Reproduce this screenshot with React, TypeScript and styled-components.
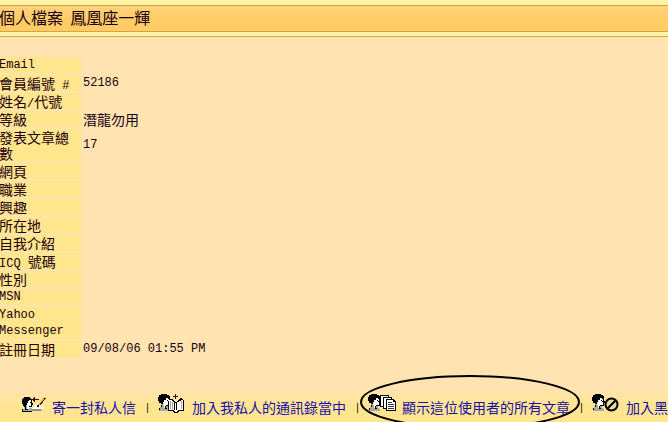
import React from "react";
import styled, { createGlobalStyle } from "styled-components";

const GlobalStyle = createGlobalStyle`
  html, body {
    margin: 0;
    overflow: hidden;
    background: #ffe3b0;
  }
  body {
    font-family: "Noto Sans CJK TC", sans-serif;
    font-size: 14px;
    line-height: 16px;
    color: #1a0010;
  }
`;

const Page = styled.main`
  position: relative;
  overflow: hidden;
`;

const Banner = styled.header`
  padding: 5px 0 4px;
  background: #fff3a6;
  border-bottom: 1px solid #dba850;
`;

const Title = styled.h1`
  margin: 0;
  padding: 0 0 3px;
  text-indent: -1px;
  font-size: 16px;
  font-weight: 400;
  line-height: 22px;
  background: linear-gradient(#ffd27a, #ffcb64 60%, #ffcc66);
  border: solid #d9a044;
  border-width: 1px 0;
`;

const Details = styled.table`
  margin: 18px 0 0 -3px;
  border-spacing: 2px;
  border-collapse: separate;
`;

const Label = styled.th`
  width: 82px;
  height: 16px;
  padding: 0;
  box-sizing: border-box;
  font-weight: 400;
  text-align: left;
  background: #ffe58c;
`;

const Value = styled.td`
  padding: 0;
  white-space: nowrap;
`;

const Mono = styled.span`
  font-family: "Liberation Mono", monospace;
  font-size: 12px;
  line-height: 0;
`;

const MonoBlock = styled(Mono)`
  display: block;
  line-height: 16px;
`;

const Actions = styled.nav`
  display: flex;
  align-items: flex-end;
  margin-top: 24px;
  padding: 10px 0 7px 22px;
  white-space: nowrap;
  background: linear-gradient(#ffe3b0 15%, #ffe592 55%, #ffe58c);
`;

const Action = styled.a`
  display: flex;
  align-items: flex-end;
  gap: 6px;
  flex: none;
  color: #1a10a8;
  text-decoration: none;
`;

const Icon = styled.svg`
  display: block;
  flex: none;
  margin-bottom: 2px;
`;

const Separator = styled.span`
  flex: none;
  width: 7px;
  margin: 0 7px 0 8px;
  font-family: "Liberation Mono", monospace;
  font-size: 10px;
  line-height: 12px;
  text-align: center;
`;

const Circle = styled.svg`
  position: absolute;
  left: 360px;
  bottom: -8px;
  pointer-events: none;
`;

const Head = () => (
  <g>
    <path d="M3 9H5V12H10V15L12 16V18H1V15L3 14Z" fill="#a9a9a4" />
    <path d="M6 5H11V8L12 9V10H11V13H7V15H6Z" fill="#fff" />
    <path d="M3 1H9V2H11V3H12V6H10V5H8V7H6V9H5V11H3V10H1V8H0V4H1V2H3Z" fill="#000" />
    <path d="M11 6H12V8H13V10H12V13H8V12H11V9H10V8H11ZM9 7H10V8H9ZM7 13H8V15H9V16H7ZM3 12H4V14H3ZM1 15H2V17H1Z" fill="#000" />
  </g>
);

const LetterIcon = () => (
  <Icon width="24" height="18" viewBox="0 0 24 18" shapeRendering="crispEdges" aria-hidden="true">
    <path d="M2 9H8V13H11V16H0V14H2Z" fill="#a9a9a4" />
    <path d="M5 6H9V11L7 14H5Z" fill="#fff" />
    <path d="M2 2H8V3H9V5H7V6H6V8H5V10H4V12H2V11H1V9H0V4H1V3H2Z" fill="#000" />
    <path d="M9 5H10V8H11V10H10V12H7V11H9V8H8V7H9ZM3 12H4V14H6V15H3ZM0 14H1V16H10V17H0Z" fill="#000" />
    <path d="M9 4H11V3H12V2H13V4H17V5H13V7H12V6H11V5H9Z" fill="#3b0808" />
    <path d="M10 14L14 9H18L20 12H22L19 15H10Z" fill="#fff" />
    <path d="M10 14H20V15H19V16H11V15H10Z" fill="#8c8c88" />
    <path d="M23.500 3L17.500 10.500" stroke="#4a3208" strokeWidth="1" />
    <path d="M22.500 2.500L16.500 10" stroke="#e9a23c" strokeWidth="1" />
    <path d="M15 10H17V12H15Z" fill="#000" />
  </Icon>
);

const BookIcon = () => (
  <Icon width="28" height="20" viewBox="0 0 28 20" shapeRendering="crispEdges" aria-hidden="true">
    <Head />
    <path d="M17 1H18V3H20V4H18V6H17V4H15V3H17Z" fill="#3b0808" />
    <path d="M11 7H13V6H15V7H17V9H19V7H21V5H23V7H25V18H19V19H17V18H11Z" fill="#fff" />
    <path d="M10 8H11V17H16V18H17V19H19V18H20V17H25V7H26V18H21V19H20V20H16V19H15V18H10ZM12 6H15V7H16V8H17V17H16V9H15V8H14V7H12ZM17 9H19V17H18V10H17ZM19 8H20V7H21V6H22V5H24V6H25V7H23V8H21V9H19Z" fill="#000" />
    <path d="M12 8H13V16H12ZM14 9H15V17H14ZM23 8H24V16H23Z" fill="#aaa9a4" />
  </Icon>
);

const PostsIcon = () => (
  <Icon width="28" height="20" viewBox="0 0 28 20" shapeRendering="crispEdges" aria-hidden="true">
    <Head />
    <path d="M12.5 2.5H20.5V13.5H12.5Z" fill="#fff" stroke="#000" />
    <path d="M15.5 4.5H23.5V15.5H15.5Z" fill="#fff" stroke="#000" />
    <path d="M18.5 6.5H25.5L27.5 8.5V17.5H18.5Z" fill="#fff" stroke="#000" />
    <path d="M20 9H24V10H20ZM20 11H26V12H20ZM20 13H26V14H20ZM20 15H26V16H20Z" fill="#333" />
    <path d="M25 6H26V8H27V9H25Z" fill="#000" />
  </Icon>
);

const BlockIcon = () => (
  <Icon width="28" height="20" viewBox="0 0 28 20" aria-hidden="true">
    <g shapeRendering="crispEdges">
      <Head />
    </g>
    <circle cx="19.5" cy="11.5" r="6" fill="#e6dba8" stroke="#000" strokeWidth="2" />
    <path d="M15.5 15.5L23.5 7.5" stroke="#000" strokeWidth="2" />
  </Icon>
);

const rows: { label: React.ReactNode; value?: React.ReactNode }[] = [
  { label: <MonoBlock>Email</MonoBlock> },
  { label: <>會員編號<Mono> #</Mono></>, value: <MonoBlock>52186</MonoBlock> },
  { label: <>姓名<Mono>/</Mono>代號</> },
  { label: "等級", value: "潛龍勿用" },
  { label: "發表文章總數", value: <MonoBlock>17</MonoBlock> },
  { label: "網頁" },
  { label: "職業" },
  { label: "興趣" },
  { label: "所在地" },
  { label: "自我介紹" },
  { label: <><Mono>ICQ </Mono>號碼</> },
  { label: "性別" },
  { label: <MonoBlock>MSN</MonoBlock> },
  { label: <MonoBlock>Yahoo Messenger</MonoBlock> },
  { label: "註冊日期", value: <MonoBlock>09/08/06 01:55 PM</MonoBlock> },
];

const actions = [
  { text: "寄一封私人信", Glyph: LetterIcon },
  { text: "加入我私人的通訊錄當中", Glyph: BookIcon },
  { text: "顯示這位使用者的所有文章", Glyph: PostsIcon },
  { text: "加入黑", Glyph: BlockIcon },
];

export default function App() {
  return (
    <Page>
      <GlobalStyle />
      <Banner>
        <Title>個人檔案<Mono> </Mono>鳳凰座一輝</Title>
      </Banner>
      <Details>
        <tbody>
          {rows.map((row, i) => (
            <tr key={i}>
              <Label scope="row">{row.label}</Label>
              <Value>{row.value}</Value>
            </tr>
          ))}
        </tbody>
      </Details>
      <Actions>
        {actions.map(({ text, Glyph }, i) => (
          <React.Fragment key={text}>
            {i > 0 && <Separator>|</Separator>}
            <Action href="#">
              <Glyph />
              {text}
            </Action>
          </React.Fragment>
        ))}
      </Actions>
      <Circle width="222" height="56" viewBox="0 0 222 56" aria-hidden="true">
        <ellipse cx="110" cy="28" rx="109" ry="26" fill="none" stroke="#000" strokeWidth="2" />
      </Circle>
    </Page>
  );
}
